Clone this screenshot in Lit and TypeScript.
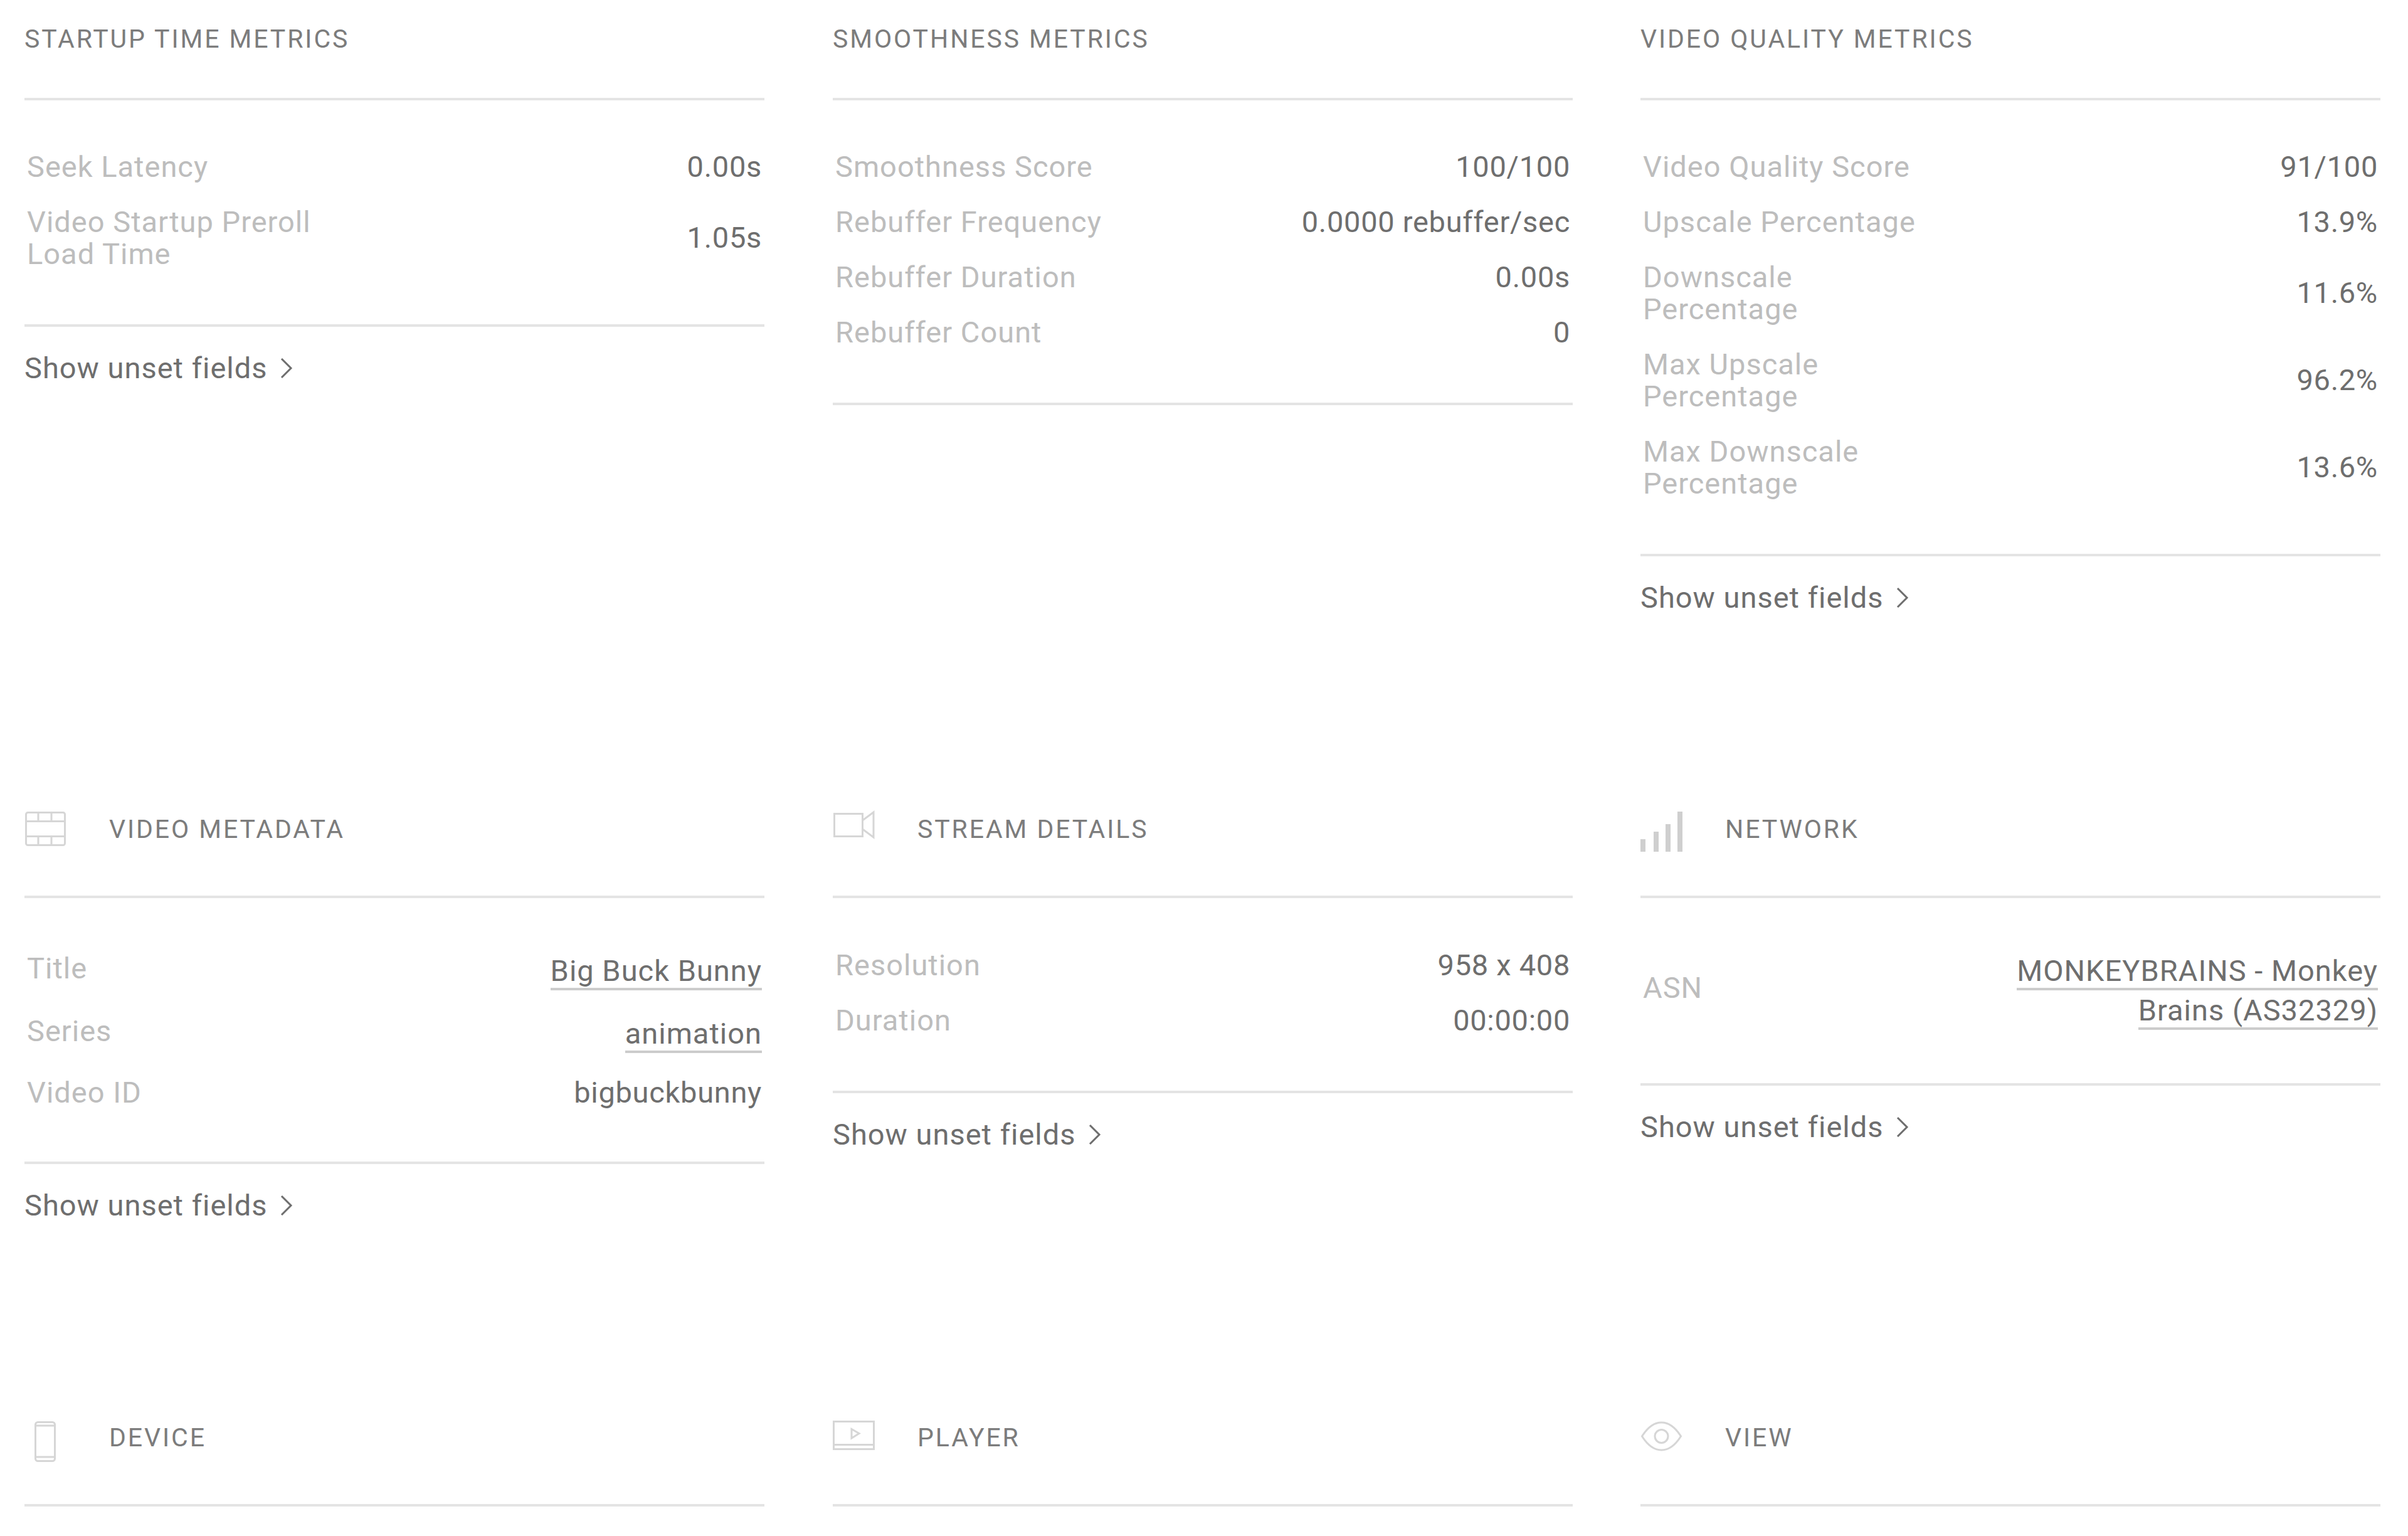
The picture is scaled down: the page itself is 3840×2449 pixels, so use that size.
import { LitElement, html, css, svg, TemplateResult } from "lit";
import { customElement } from "lit/decorators.js";

type Row = { label: unknown; value: unknown; link?: boolean };
type Section = { title: string; icon?: TemplateResult; rows?: Row[]; unset?: boolean; rowsClass?: string };

const icons = {
  film: svg`<rect x="2.5" y="10.5" width="62" height="52" rx="3"/><path d="M2 24.5H65M2 48.5H65M22 10V24M43 10V24M22 49V63M43 49V63"/>`,
  camera: svg`<rect x="2.5" y="12.5" width="45" height="36"/><path d="M47.5 23L65 10V50L47.5 37Z"/>`,
  network: svg`<g class="fill"><rect x="0" y="53" width="8" height="20"/><rect x="21" y="41" width="8" height="32"/><rect x="40" y="29" width="8" height="44"/><rect x="59" y="9" width="8" height="64"/></g>`,
  device: svg`<rect x="17.5" y="12.5" width="31" height="62" rx="4"/><path d="M17 18H49M17 68H49"/>`,
  player: svg`<rect x="1.5" y="11.5" width="64" height="44"/><path d="M1 48.5H66"/><path d="M30 23.5L42 30.5L30 38Z"/>`,
  view: svg`<path d="M2.5 35C12 20 22 13 33.5 13C45 13 55 20 64.5 35C55 50 45 57 33.5 57C22 57 12 50 2.5 35Z"/><circle cx="33.5" cy="35" r="10.5"/>`,
};

const sections: Section[] = [
  { title: "STARTUP TIME METRICS", unset: true, rowsClass: "top", rows: [
    { label: "Seek Latency", value: "0.00s" },
    { label: html`Video Startup Preroll<br />Load Time`, value: "1.05s" },
  ]},
  { title: "SMOOTHNESS METRICS", rowsClass: "top", rows: [
    { label: "Smoothness Score", value: "100/100" },
    { label: "Rebuffer Frequency", value: "0.0000 rebuffer/sec" },
    { label: "Rebuffer Duration", value: "0.00s" },
    { label: "Rebuffer Count", value: "0" },
  ]},
  { title: "VIDEO QUALITY METRICS", unset: true, rowsClass: "top", rows: [
    { label: "Video Quality Score", value: "91/100" },
    { label: "Upscale Percentage", value: "13.9%" },
    { label: html`Downscale<br />Percentage`, value: "11.6%" },
    { label: html`Max Upscale<br />Percentage`, value: "96.2%" },
    { label: html`Max Downscale<br />Percentage`, value: "13.6%" },
  ]},
  { title: "VIDEO METADATA", icon: icons.film, unset: true, rowsClass: "links", rows: [
    { label: "Title", value: "Big Buck Bunny", link: true },
    { label: "Series", value: "animation", link: true },
    { label: "Video ID", value: "bigbuckbunny" },
  ]},
  { title: "STREAM DETAILS", icon: icons.camera, unset: true, rows: [
    { label: "Resolution", value: "958 x 408" },
    { label: "Duration", value: "00:00:00" },
  ]},
  { title: "NETWORK", icon: icons.network, unset: true, rowsClass: "links", rows: [
    { label: "ASN", value: html`MONKEYBRAINS - Monkey<br />Brains (AS32329)`, link: true },
  ]},
  { title: "DEVICE", icon: icons.device },
  { title: "PLAYER", icon: icons.player },
  { title: "VIEW", icon: icons.view },
];

@customElement("app-root")
export class AppRoot extends LitElement {
  static styles = css`
    :host {
      display: block;
      height: 2449px;
      overflow: hidden;
      background: #fff;
      font-family: Roboto, "Liberation Sans", sans-serif;
      font-size: 47px;
      letter-spacing: 1px;
      color: #6e6e6e;
    }
    .grid {
      display: grid;
      grid-template-columns: 1289px 1288px 1180px;
      grid-template-rows: 1285px 970px auto;
      padding-left: 39px;
    }
    .section { width: 1180px; }
    .head {
      display: flex;
      align-items: flex-start;
      font-size: 41px;
      letter-spacing: 2.9px;
      color: #7c7c7c;
      border-bottom: 4px solid #e4e4e4;
    }
    .head.plain { line-height: 124px; padding-bottom: 32px; }
    .head.icon { line-height: 75px; padding-bottom: 63px; }
    .head svg {
      flex: none;
      width: 135px;
      height: 80px;
      fill: none;
      stroke: #d6d6d6;
      stroke-width: 3;
    }
    .head svg .fill { fill: #cfcfcf; stroke: none; }
    .rows {
      padding: 62px 4px 69px;
      border-bottom: 4px solid #e4e4e4;
    }
    .rows.top { padding-top: 61px; padding-bottom: 69px; }
    .rows.links { padding-top: 65px; padding-bottom: 67px; }
    .row {
      display: flex;
      justify-content: space-between;
      align-items: center;
      padding: 18.5px 0;
      line-height: 51px;
    }
    .label { color: #bdbdbd; letter-spacing: 1px; }
    .value { text-align: right; color: #6e6e6e; letter-spacing: 0.7px; }
    .row.link .label { margin-bottom: 8px; }
    .row.link .value { line-height: 63px; letter-spacing: 1px; }
    .value a { color: #6e6e6e; text-decoration: none; border-bottom: 4px solid #ccc; }
    .unset {
      display: flex;
      align-items: center;
      gap: 20px;
      margin-top: 40px;
      line-height: 51px;
    }
    .unset svg { width: 20px; height: 34px; fill: none; stroke: #6e6e6e; stroke-width: 3; }
  `;

  private renderRow(r: Row) {
    return html`<div class="row ${r.link ? "link" : ""}">
      <div class="label">${r.label}</div>
      <div class="value">${r.link ? html`<a>${r.value}</a>` : r.value}</div>
    </div>`;
  }

  private renderSection(s: Section) {
    return html`<div class="section">
      <div class="head ${s.icon ? "icon" : "plain"}">
        ${s.icon ? html`<svg viewBox="0 0 135 80">${s.icon}</svg>` : ""}
        <span>${s.title}</span>
      </div>
      ${s.rows
        ? html`<div class="rows ${s.rowsClass ?? ""}">${s.rows.map((r) => this.renderRow(r))}</div>`
        : ""}
      ${s.unset
        ? html`<div class="unset">Show unset fields
            <svg viewBox="0 0 20 34"><path d="M2 2L17 17L2 32" /></svg>
          </div>`
        : ""}
    </div>`;
  }

  render() {
    return html`<div class="grid">${sections.map((s) => this.renderSection(s))}</div>`;
  }
}
